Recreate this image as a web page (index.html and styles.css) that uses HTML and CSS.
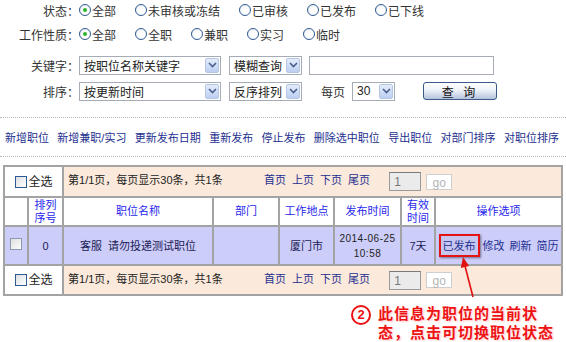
FILE: index.html
```html
<!DOCTYPE html>
<html lang="zh-CN">
<head>
<meta charset="UTF-8">
<meta name="viewport" content="width=device-width, initial-scale=1.0">
<title>职位管理</title>
<link rel="stylesheet" href="styles.css">
</head>
<body>
<div class="page">

<div class="filter">
<div class="frow r1">
<span class="flabel">状态：</span>
<span class="opt"><i class="radio on"></i>全部</span>
<span class="opt"><i class="radio"></i>未审核或冻结</span>
<span class="opt"><i class="radio"></i>已审核</span>
<span class="opt"><i class="radio"></i>已发布</span>
<span class="opt"><i class="radio"></i>已下线</span>
</div>
<div class="frow r2">
<span class="flabel">工作性质：</span>
<span class="opt"><i class="radio on"></i>全部</span>
<span class="opt"><i class="radio"></i>全职</span>
<span class="opt"><i class="radio"></i>兼职</span>
<span class="opt"><i class="radio"></i>实习</span>
<span class="opt"><i class="radio"></i>临时</span>
</div>
<div class="frow r3">
<span class="flabel">关键字：</span>
<span class="select w-key"><span class="val">按职位名称关键字</span><i class="drop"><svg width="9" height="6" viewBox="0 0 9 6"><path d="M1 1 L4.5 4.5 L8 1" fill="none" stroke="#4a5f8c" stroke-width="1.6"/></svg></i></span>
<span class="select w-mode"><span class="val">模糊查询</span><i class="drop"><svg width="9" height="6" viewBox="0 0 9 6"><path d="M1 1 L4.5 4.5 L8 1" fill="none" stroke="#4a5f8c" stroke-width="1.6"/></svg></i></span>
<span class="textbox"></span>
</div>
<div class="frow r4">
<span class="flabel">排序：</span>
<span class="select w-key"><span class="val">按更新时间</span><i class="drop"><svg width="9" height="6" viewBox="0 0 9 6"><path d="M1 1 L4.5 4.5 L8 1" fill="none" stroke="#4a5f8c" stroke-width="1.6"/></svg></i></span>
<span class="select w-mode"><span class="val">反序排列</span><i class="drop"><svg width="9" height="6" viewBox="0 0 9 6"><path d="M1 1 L4.5 4.5 L8 1" fill="none" stroke="#4a5f8c" stroke-width="1.6"/></svg></i></span>
<span class="per">每页</span>
<span class="select w-num"><span class="val">30</span><i class="drop"><svg width="9" height="6" viewBox="0 0 9 6"><path d="M1 1 L4.5 4.5 L8 1" fill="none" stroke="#4a5f8c" stroke-width="1.6"/></svg></i></span>
<button class="btn" type="button">查 询</button>
</div>
</div>

<div class="actions">
<a>新增职位</a>
<a>新增兼职/实习</a>
<a>更新发布日期</a>
<a>重新发布</a>
<a>停止发布</a>
<a>删除选中职位</a>
<a>导出职位</a>
<a>对部门排序</a>
<a>对职位排序</a>
</div>

<table class="grid">
<colgroup>
<col style="width:24px"><col style="width:35px"><col style="width:150px"><col style="width:66px">
<col style="width:55px"><col style="width:67px"><col style="width:34px"><col style="width:127px">
</colgroup>
<tr class="pager">
<td colspan="2" class="all"><i class="check"></i>全选</td>
<td colspan="6" class="pinfo">
<span class="info">第1/1页，每页显示30条，共1条</span>
<a>首页</a><a>上页</a><a>下页</a><a>尾页</a>
<span class="pnum">1</span><span class="go">go</span>
</td>
</tr>
<tr class="head">
<td></td><td>排列<br>序号</td><td>职位名称</td><td>部门</td><td>工作地点</td><td>发布时间</td><td>有效<br>时间</td><td>操作选项</td>
</tr>
<tr class="data">
<td><i class="check dim"></i></td>
<td>0</td>
<td>客服&nbsp;&nbsp;请勿投递测试职位</td>
<td></td>
<td>厦门市</td>
<td class="date">2014-06-25<br>10:58</td>
<td>7天</td>
<td class="ops"><span class="state">已发布</span><a>修改</a><a>刷新</a><a>简历</a></td>
</tr>
<tr class="pager bottom">
<td colspan="2" class="all"><i class="check"></i>全选</td>
<td colspan="6" class="pinfo">
<span class="info">第1/1页，每页显示30条，共1条</span>
<a>首页</a><a>上页</a><a>下页</a><a>尾页</a>
<span class="pnum">1</span><span class="go">go</span>
</td>
</tr>
</table>

<div class="note">
<span class="num">2</span>
<p>此信息为职位的当前状<br>态，点击可切换职位状态</p>
</div>

<!-- 指向状态的箭头 -->
<svg class="arrow" width="30" height="46" viewBox="0 0 30 46">
<line x1="14.5" y1="10" x2="23" y2="43" stroke="#e01010" stroke-width="1.6"/>
<polygon points="13,3 19.1,12 10.8,14" fill="#e01010"/>
</svg>

</div>
</body>
</html>
```

FILE: styles.css
```css
body {
  margin: 0;
  background: #fff;
  color: #333;
  font-family: "Liberation Sans", "Noto Sans CJK SC", sans-serif;
  font-size: 11px;
}
.page {
  position: relative;
  padding: 0 5px 0 3px;
}

/* 查询条件 */
.frow {
  display: flex;
  align-items: center;
  height: 20px;
}
.r2 { margin-top: 4px; }
.r3 { margin-top: 11px; }
.r4 { margin-top: 6px; }
.flabel {
  width: 76px;
  text-align: right;
  color: #333;
  font-size: 12px;
}
.opt {
  display: flex;
  align-items: center;
  margin-right: 19px;
  font-size: 12px;
}
.r1 .opt:first-of-type,
.r2 .opt:first-of-type { margin-left: 9px; }
.radio {
  display: inline-block;
  box-sizing: border-box;
  width: 12px;
  height: 12px;
  margin-right: 1px;
  border: 1px solid #2c5a92;
  border-radius: 50%;
  background: radial-gradient(circle at 60% 60%, #fff 40%, #dfe4ea 100%);
  position: relative;
}
.radio.on::after {
  content: "";
  position: absolute;
  left: 3px;
  top: 3px;
  width: 4px;
  height: 4px;
  border-radius: 50%;
  background: #2bb52b;
}
.select {
  display: flex;
  align-items: center;
  box-sizing: border-box;
  height: 19px;
  border: 1px solid #a5acb5;
  background: #fff;
  padding: 0 1px 0 4px;
  font-size: 12px;
  color: #222;
}
.select .val { flex: 1; }
.drop {
  display: flex;
  align-items: center;
  justify-content: center;
  box-sizing: border-box;
  width: 14px;
  height: 15px;
  border: 1px solid #b5c6e3;
  border-radius: 2px;
  background: linear-gradient(#e4ecfb, #bccff1);
}
.w-key { width: 142px; }
.w-mode { width: 73px; margin-left: 8px; }
.w-num { width: 43px; margin-left: 7px; }
.textbox {
  box-sizing: border-box;
  width: 185px;
  height: 19px;
  margin-left: 7px;
  border: 1px solid #a5acb5;
}
.per {
  margin-left: 19px;
  font-size: 12px;
}
.btn {
  box-sizing: border-box;
  width: 74px;
  height: 18px;
  margin-left: 28px;
  padding: 0;
  border: 1px solid #3d5a8a;
  border-radius: 3px;
  background: linear-gradient(#ffffff, #eef2f8 45%, #b3c2dc);
  font-family: "Liberation Sans", "Noto Sans CJK SC", sans-serif;
  font-size: 12px;
  color: #111;
  letter-spacing: 3px;
}

/* 操作链接 */
.actions {
  display: flex;
  justify-content: space-between;
  align-items: center;
  height: 38px;
  margin-top: 16px;
  margin-left: -3px;
  margin-right: -5px;
  padding: 0 7px 0 5px;
  border-top: 1px dotted #b8b8b8;
  border-bottom: 1px dotted #b8b8b8;
}
.actions a,
.pinfo a,
.ops a {
  color: #1d2f8f;
  font-size: 11px;
}

/* 列表 */
.grid {
  width: 558px;
  margin-top: 8px;
  border-collapse: collapse;
  table-layout: fixed;
  border: 2px solid #9c9c9c;
}
.grid td {
  border: 2px solid #a3a3a3;
  padding: 0;
  text-align: center;
  line-height: 14px;
}
.pager td { height: 29px; background: #fbe9db; }
.pager.bottom td { height: 28px; }
.pager td.all {
  background: #fff;
  font-size: 12px;
  color: #222;
}
.all .check { margin-right: 2px; vertical-align: -2px; }
.check {
  display: inline-block;
  box-sizing: border-box;
  width: 12px;
  height: 12px;
  border: 1px solid #2c5a92;
  background: linear-gradient(135deg, #dcdfe3, #fff);
}
.check.dim {
  border-color: #8c9aae;
  background: linear-gradient(135deg, #e0e0e0, #fbfbfb);
}
.pinfo {
  text-align: left !important;
  padding-left: 4px !important;
}
.pinfo .info {
  display: inline-block;
  width: 193px;
  color: #222;
}
.pinfo a { margin-right: 6px; }
.pnum {
  display: inline-block;
  box-sizing: border-box;
  width: 32px;
  height: 19px;
  margin-left: 10px;
  padding: 2px 0 0 4px;
  vertical-align: middle;
  border: 1px solid #9a9a9a;
  border-top-color: #7a7a7a;
  background: #ebebeb;
  color: #777;
  font-size: 12px;
}
.go {
  display: inline-block;
  box-sizing: border-box;
  width: 26px;
  height: 16px;
  margin-left: 5px;
  padding-top: 1px;
  vertical-align: middle;
  border: 1px solid #cfcfcf;
  background: #fff;
  color: #b5b5b5;
  text-align: center;
  font-size: 12px;
}
.head td {
  height: 27px;
  background: #fff;
  color: #2727ee;
  font-size: 11px;
  line-height: 13px;
}
.data td {
  height: 37px;
  background: #cdcdfa;
  color: #1b1b55;
  font-size: 11px;
}
.data td.date {
  color: #222;
  font-size: 10px;
  letter-spacing: 0.5px;
  line-height: 15px;
}
.ops a { margin-left: 5px; }
.ops a:first-of-type { margin-left: 3px; }
.state {
  display: inline-block;
  padding: 3px 2px 2px;
  border: 2px solid #e41414;
  background: #c6c6f0;
  color: #1d2f8f;
  box-shadow: 1px 1px 2px rgba(0, 0, 0, 0.45);
}

/* 说明 */
.note {
  display: flex;
  margin-top: 7px;
  padding-left: 348px;
}
.num {
  box-sizing: border-box;
  width: 20px;
  height: 20px;
  margin-top: 2px;
  border: 2px solid #ee1111;
  border-radius: 50%;
  color: #ee1111;
  font-size: 13px;
  font-weight: bold;
  line-height: 16px;
  text-align: center;
  text-shadow: 0 0 2px #fff;
}
.note p {
  margin: 0 0 0 7px;
  color: #ee1111;
  font-family: "Noto Sans CJK SC", sans-serif;
  font-size: 15px;
  font-weight: bold;
  letter-spacing: 1px;
  line-height: 19px;
  text-shadow: 0 0 2px #fff, 1px 1px 2px #fbb;
}
.arrow {
  position: absolute;
  left: 450px;
  top: 254px;
}
```
